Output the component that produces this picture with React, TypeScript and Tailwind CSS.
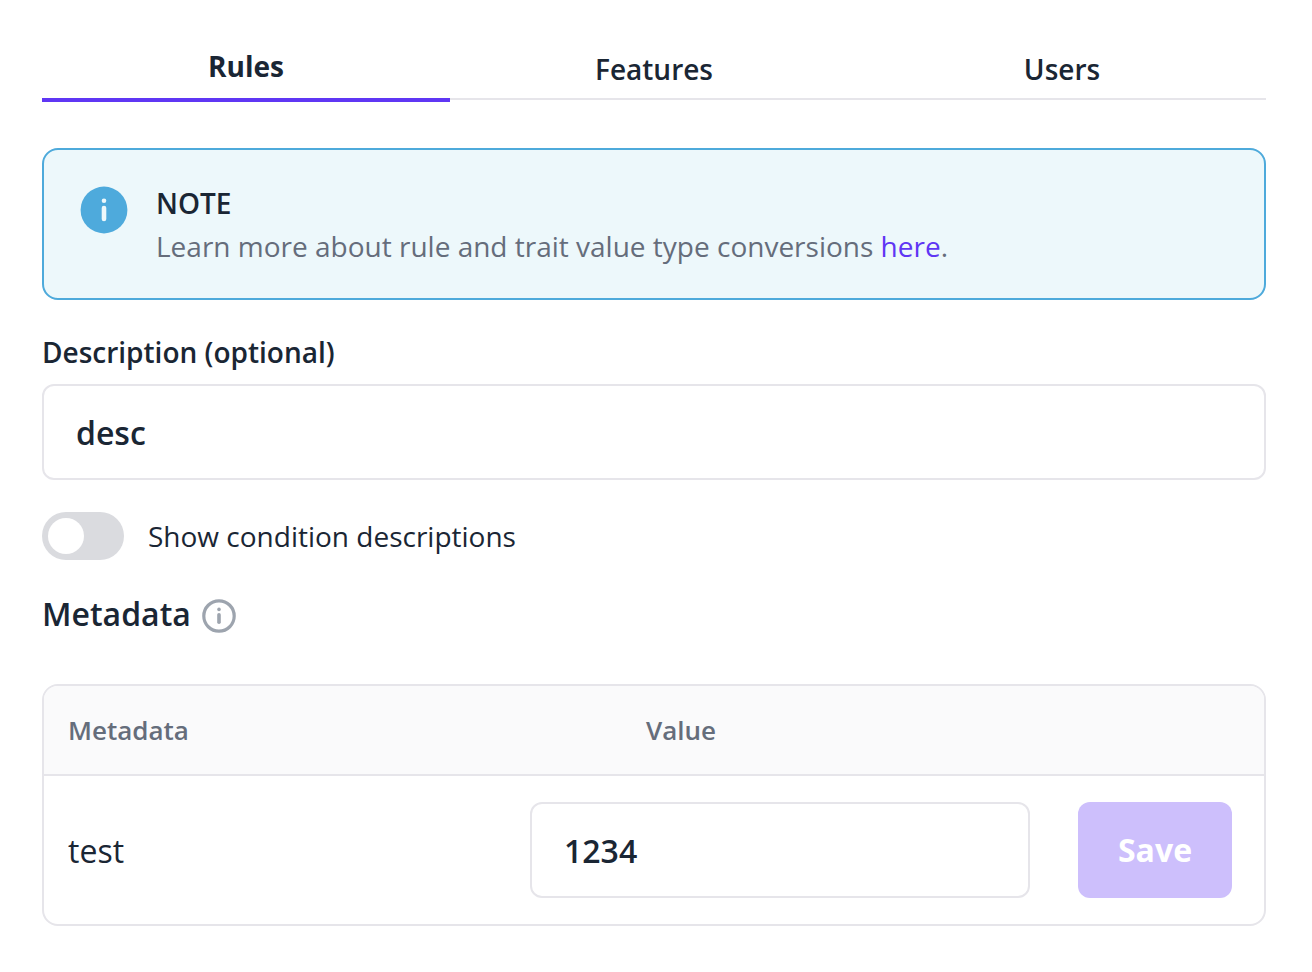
export default function App() {
  return (
    <main className="h-[972px] w-[1312px] bg-white pl-[42px] pr-[46px] pt-[38px] font-['Open_Sans',sans-serif] text-[#1a2634]">
      <nav className="grid h-[64px] grid-cols-3 text-center text-[28px] leading-[38px]">
        <button className="h-[64px] border-b-4 border-[#5f36f4] pb-1 font-bold">Rules</button>
        <button className="h-[62px] border-b-2 border-[#e6e5ea] pt-px font-semibold">Features</button>
        <button className="h-[62px] border-b-2 border-[#e6e5ea] pt-px font-semibold">Users</button>
      </nav>
      <section className="mt-[46px] flex h-[152px] rounded-2xl border-2 border-[#4eaadb] bg-[#edf8fb] pl-9 pt-8">
        <svg className="mt-1 h-12 w-12 shrink-0" viewBox="0 0 48 48">
          <circle cx="24" cy="24" r="23.4" fill="#4eaadc" />
          <circle cx="24" cy="14.8" r="2.3" fill="#edf8fb" />
          <path d="M24 22v11" stroke="#edf8fb" strokeWidth="4.6" strokeLinecap="round" />
        </svg>
        <div className="ml-7 text-[28px] leading-[44px]">
          <div className="-mt-px -mb-px font-semibold">NOTE</div>
          <p className="text-[#656d7b]">Learn more about rule and trait value type conversions <a className="text-[#5f36f4]">here</a>.</p>
        </div>
      </section>
      <label className="mt-[31px] block text-[28px] leading-[42px] font-semibold">Description (optional)</label>
      <input className="mt-[11px] block h-24 w-full rounded-xl border-2 border-[#e6e5ea] px-8 text-[32px] font-semibold outline-none" defaultValue="desc" />
      <div className="mt-8 flex h-12 items-center gap-6">
        <button className="h-12 w-[82px] rounded-full bg-[#dadbdf] p-1.5"><span className="block h-9 w-9 rounded-full bg-white" /></button>
        <span className="text-[28px]">Show condition descriptions</span>
      </div>
      <div className="mt-[29px] flex h-[50px] items-center gap-[11px]">
        <h2 className="text-[32px] leading-[50px] font-semibold">Metadata</h2>
        <svg className="mt-1 h-[34px] w-[34px]" viewBox="0 0 34 34">
          <circle cx="17" cy="17" r="15.2" fill="none" stroke="#9da4ae" strokeWidth="3.2" />
          <circle cx="17" cy="10.4" r="1.8" fill="#9da4ae" />
          <path d="M17 15.7v7.6" stroke="#9da4ae" strokeWidth="3.6" strokeLinecap="round" />
        </svg>
      </div>
      <section className="mt-[45px] h-[242px] overflow-hidden rounded-2xl border-2 border-[#e6e5ea]">
        <header className="flex h-[90px] items-center border-b-2 border-[#e6e5ea] bg-[#fafafb] pl-6 text-[26px] font-semibold text-[#656d7b]">
          <span className="w-[578px]">Metadata</span><span>Value</span>
        </header>
        <div className="flex h-[148px] items-center pl-6">
          <span className="w-[462px] pt-0.5 text-[32px]">test</span>
          <input className="h-24 w-[500px] rounded-xl border-2 border-[#e6e5ea] px-8 text-[32px] font-semibold outline-none" defaultValue="1234" />
          <button className="ml-12 h-24 w-[154px] rounded-xl bg-[#cdbffc] text-[32px] font-bold text-white">Save</button>
        </div>
      </section>
    </main>
  );
}
